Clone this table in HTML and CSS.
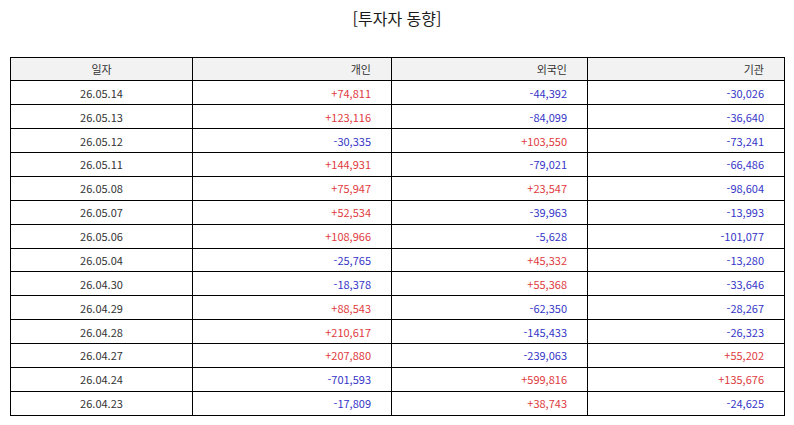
FILE: index.html
```html
<!DOCTYPE html>
<html lang="ko">
<head>
<meta charset="utf-8">
<title>투자자 동향</title>
<link rel="stylesheet" href="styles.css">
</head>
<body>
<div class="page">
  <h2 class="title">[투자자 동향]</h2>
  <table class="grid">
    <colgroup>
      <col class="c-date"><col class="c-ind"><col class="c-for"><col class="c-inst">
    </colgroup>
    <thead>
      <tr><th class="date">일자</th><th>개인</th><th>외국인</th><th>기관</th></tr>
    </thead>
    <tbody>
      <tr><td class="date">26.05.14</td><td class="up">+74,811</td><td class="dn">-44,392</td><td class="dn">-30,026</td></tr>
      <tr><td class="date">26.05.13</td><td class="up">+123,116</td><td class="dn">-84,099</td><td class="dn">-36,640</td></tr>
      <tr><td class="date">26.05.12</td><td class="dn">-30,335</td><td class="up">+103,550</td><td class="dn">-73,241</td></tr>
      <tr><td class="date">26.05.11</td><td class="up">+144,931</td><td class="dn">-79,021</td><td class="dn">-66,486</td></tr>
      <tr><td class="date">26.05.08</td><td class="up">+75,947</td><td class="up">+23,547</td><td class="dn">-98,604</td></tr>
      <tr><td class="date">26.05.07</td><td class="up">+52,534</td><td class="dn">-39,963</td><td class="dn">-13,993</td></tr>
      <tr><td class="date">26.05.06</td><td class="up">+108,966</td><td class="dn">-5,628</td><td class="dn">-101,077</td></tr>
      <tr><td class="date">26.05.04</td><td class="dn">-25,765</td><td class="up">+45,332</td><td class="dn">-13,280</td></tr>
      <tr><td class="date">26.04.30</td><td class="dn">-18,378</td><td class="up">+55,368</td><td class="dn">-33,646</td></tr>
      <tr><td class="date">26.04.29</td><td class="up">+88,543</td><td class="dn">-62,350</td><td class="dn">-28,267</td></tr>
      <tr><td class="date">26.04.28</td><td class="up">+210,617</td><td class="dn">-145,433</td><td class="dn">-26,323</td></tr>
      <tr><td class="date">26.04.27</td><td class="up">+207,880</td><td class="dn">-239,063</td><td class="up">+55,202</td></tr>
      <tr><td class="date">26.04.24</td><td class="dn">-701,593</td><td class="up">+599,816</td><td class="up">+135,676</td></tr>
      <tr><td class="date">26.04.23</td><td class="dn">-17,809</td><td class="up">+38,743</td><td class="dn">-24,625</td></tr>
    </tbody>
  </table>
</div>
</body>
</html>
```

FILE: styles.css
```css
html, body {
  margin: 0;
  padding: 0;
  background: #ffffff;
}

.page {
  padding: 0 10px;
  font-family: "Noto Sans CJK KR", "Noto Sans", sans-serif;
  color: #333333;
}

.title {
  margin: 0;
  padding-top: 6px;
  height: 56.5px;
  box-sizing: border-box;
  text-align: center;
  font-size: 16px;
  font-weight: 400;
  line-height: 24px;
  color: #1a1a1a;
}

.grid {
  width: 774px;
  border-collapse: collapse;
  table-layout: fixed;
  font-size: 11px;
}

.c-date { width: 182px; }
.c-ind { width: 199px; }
.c-for { width: 196px; }
.c-inst { width: 197px; }

.grid th,
.grid td {
  border: 1.2px solid #000000;
  height: 23.88px;
  padding: 0 20px 0 4px;
  box-sizing: border-box;
  text-align: right;
  line-height: 14px;
  vertical-align: middle;
  font-weight: 400;
}

.grid th {
  background: #f2f2f2;
  color: #333333;
}

.grid .date {
  text-align: center;
  padding: 0 4px;
}

.up { color: #e03a3e; }
.dn { color: #3535c8; }
```
